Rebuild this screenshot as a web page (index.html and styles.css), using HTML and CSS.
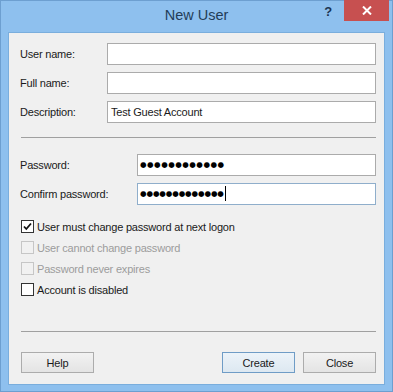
FILE: index.html
```html
<!DOCTYPE html>
<html lang="en">
<head>
    <meta charset="UTF-8">
    <title>New User</title>
    <link rel="stylesheet" href="styles.css">
</head>
<body>

<div class="window">
    <div class="titlebar">
        <span class="title">New User</span>
        <div class="controls">
            <span class="help-btn">?</span>
            <span class="close-btn">
                <svg width="10" height="9" viewBox="0 0 10 9">
                    <path d="M1 0.5 L9 8.5 M9 0.5 L1 8.5" stroke="#ffffff" stroke-width="2"/>
                </svg>
            </span>
        </div>
    </div>

    <div class="content">
        <div class="fields names">
            <label>User name:</label>
            <div class="textbox"></div>
            <label>Full name:</label>
            <div class="textbox"></div>
            <label>Description:</label>
            <div class="textbox">Test Guest Account</div>
        </div>

        <div class="separator sep-top"></div>

        <div class="fields passwords">
            <label>Password:</label>
            <div class="textbox dots">&#9679;&#9679;&#9679;&#9679;&#9679;&#9679;&#9679;&#9679;&#9679;&#9679;&#9679;&#9679;</div>
            <label>Confirm password:</label>
            <div class="textbox dots focused">&#9679;&#9679;&#9679;&#9679;&#9679;&#9679;&#9679;&#9679;&#9679;&#9679;&#9679;&#9679;&#9679;<span class="caret"></span></div>
        </div>

        <div class="checks">
            <div class="check-row">
                <span class="checkbox checked">
                    <svg width="11" height="11" viewBox="0 0 11 11">
                        <path d="M2 5.5 L4.3 8 L9 2.5" fill="none" stroke="#111111" stroke-width="1.8"/>
                    </svg>
                </span>
                <span>User must change password at next logon</span>
            </div>
            <div class="check-row disabled">
                <span class="checkbox"></span>
                <span>User cannot change password</span>
            </div>
            <div class="check-row disabled">
                <span class="checkbox"></span>
                <span>Password never expires</span>
            </div>
            <div class="check-row">
                <span class="checkbox"></span>
                <span>Account is disabled</span>
            </div>
        </div>

        <div class="separator sep-bottom"></div>

        <div class="buttons">
            <button class="btn">Help</button>
            <div class="spacer"></div>
            <button class="btn default">Create</button>
            <button class="btn">Close</button>
        </div>
    </div>
</div>

</body>
</html>
```

FILE: styles.css
```css
body {
    margin: 0;
    padding: 0;
    font-family: 'Liberation Sans', Arial, sans-serif;
    font-size: 11px;
    letter-spacing: -0.2px;
    color: #1a1a1a;
    background-color: #8ec0ee;
}

.window {
    width: 393px;
    height: 392px;
    box-sizing: border-box;
    border: 1px solid #6d9fd0;
    background-color: #8ec0ee;
    padding: 0 7px 6px 7px;
    display: flex;
    flex-direction: column;
}

.titlebar {
    position: relative;
    height: 31px;
    flex-shrink: 0;
    text-align: center;
}

.title {
    display: inline-block;
    margin-top: 6px;
    font-size: 14.5px;
    letter-spacing: 0;
    color: #233d58;
}

.controls {
    position: absolute;
    top: -1px;
    right: -4px;
    display: flex;
    align-items: flex-start;
}

.help-btn {
    margin-top: 4px;
    margin-right: 12px;
    font-weight: bold;
    font-size: 13px;
    color: #1b3552;
}

.close-btn {
    width: 45px;
    height: 21px;
    background-color: #c75050;
    display: flex;
    align-items: center;
    justify-content: center;
}

.content {
    flex: 1;
    background-color: #f0f0f0;
    border: 1px solid #7aaedd;
    padding: 10px 8px 0 11px;
}

.fields {
    display: grid;
    grid-auto-rows: 22px;
    row-gap: 7px;
    align-items: center;
}

.names {
    grid-template-columns: 87px 1fr;
}

.passwords {
    grid-template-columns: 117px 1fr;
}

.textbox {
    height: 22px;
    box-sizing: border-box;
    border: 1px solid #ababab;
    background-color: #ffffff;
    padding: 0 3px;
    line-height: 20px;
    white-space: nowrap;
    overflow: hidden;
}

.textbox.focused {
    border-color: #8faecb;
}

.dots {
    font-family: 'DejaVu Sans', sans-serif;
    font-size: 7.5px;
    letter-spacing: 0.5px;
    color: #000000;
    padding-left: 2px;
}

.dots.focused {
    letter-spacing: -0.1px;
}

.caret {
    display: inline-block;
    width: 1px;
    height: 15px;
    background-color: #000000;
    vertical-align: middle;
    margin-left: 1px;
}

.separator {
    border-top: 1px solid #a0a0a0;
    margin-left: 1px;
}

.sep-top {
    margin-top: 14px;
    margin-bottom: 16px;
}

.sep-bottom {
    margin-top: 31px;
    margin-bottom: 20px;
}

.checks {
    margin-top: 11px;
    padding-left: 1px;
}

.check-row {
    height: 21px;
    display: flex;
    align-items: center;
    gap: 3px;
}

.check-row.disabled {
    color: #9c9c9c;
}

.checkbox {
    width: 13px;
    height: 13px;
    box-sizing: border-box;
    border: 1px solid #333333;
    background-color: #ffffff;
    display: flex;
    align-items: center;
    justify-content: center;
}

.disabled .checkbox {
    border-color: #c6c6c6;
    background-color: #f1f1f1;
}

.buttons {
    display: flex;
    gap: 8px;
    padding-left: 1px;
}

.spacer {
    flex: 1;
}

.btn {
    width: 73px;
    height: 21px;
    font-family: 'Liberation Sans', Arial, sans-serif;
    font-size: 11px;
    letter-spacing: -0.2px;
    color: #1a1a1a;
    border: 1px solid #acacac;
    background: linear-gradient(#f2f2f2, #e4e4e4);
    padding: 0;
}

.btn.default {
    border-color: #6f9cc6;
    background: linear-gradient(#ecf3f9, #dde8f1);
}
```
